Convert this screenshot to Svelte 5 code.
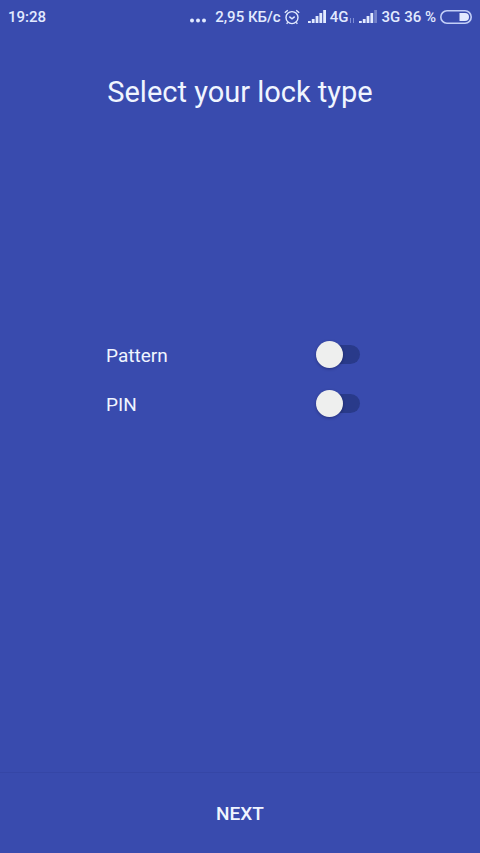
<script lang="ts">
  interface LockType {
    id: string;
    label: string;
    checked: boolean;
  }

  let lockTypes = $state<LockType[]>([
    { id: 'pattern', label: 'Pattern', checked: false },
    { id: 'pin', label: 'PIN', checked: false }
  ]);

  function select(id: string, checked: boolean) {
    lockTypes = lockTypes.map((t) => ({ ...t, checked: t.id === id && checked }));
  }
</script>

{#snippet signal(bars: number)}
  <svg class="signal" width="18" height="14" viewBox="0 0 18 14" aria-hidden="true">
    {#each [2, 4, 7, 10, 13] as h, i}
      <rect x={i * 3.8} y={13 - h} width="2.8" height={h} opacity={i < bars ? 1 : 0.35} />
    {/each}
  </svg>
{/snippet}

<div class="screen">
  <header class="status-bar">
    <time>19:28</time>
    <div class="status-right">
      <svg class="dots" width="18" height="14" viewBox="0 0 18 14" aria-hidden="true">
        <circle cx="3" cy="10.500" r="2" />
        <circle cx="9" cy="10.500" r="2" />
        <circle cx="15" cy="10.500" r="2" />
      </svg>
      <span class="speed">2,95 КБ/с</span>
      <svg class="alarm" width="16" height="16" viewBox="0 0 16 16" aria-hidden="true">
        <circle cx="8" cy="8.6" r="6" />
        <path d="M5.3 7.6 8 9.8l2.7-2.2M.8 3.8 3.8 1.2M15.2 3.8l-3-2.6M3.8 13.4l-1.2 1.4M12.2 13.4l1.2 1.4" />
      </svg>
      {@render signal(5)}
      <span class="network">4G</span>
      <svg class="traffic" width="6" height="14" viewBox="0 0 6 14" aria-hidden="true">
        <path d="M1.5 8v5M4.5 8v5" />
      </svg>
      {@render signal(4)}
      <span class="network">3G</span>
      <span class="level">36 %</span>
      <svg width="32" height="14" viewBox="0 0 32 14" aria-hidden="true">
        <rect class="shell" x=".8" y=".8" width="30.4" height="12.4" rx="6.2" />
        <path class="charge" d="M19.5 3H25a4 4 0 0 1 0 8h-5.5z" />
      </svg>
    </div>
  </header>

  <h1>Select your lock type</h1>

  <main>
    <div class="options">
      {#each lockTypes as type (type.id)}
        <label class="option" for={type.id}>
          <span>{type.label}</span>
          <input
            id={type.id}
            type="checkbox"
            role="switch"
            checked={type.checked}
            onchange={(e) => select(type.id, e.currentTarget.checked)}
          />
        </label>
      {/each}
    </div>
  </main>

  <footer>
    <button type="button">NEXT</button>
  </footer>
</div>

<style>
  :global(body) {
    margin: 0;
    background: #394bae;
  }

  .screen {
    display: flex;
    flex-direction: column;
    min-height: 100vh;
    background: #394bae;
    color: #f0f5ff;
    font-family: Roboto, sans-serif;
  }

  .status-bar {
    display: flex;
    justify-content: space-between;
    align-items: center;
    height: 34px;
    padding: 0 8px;
    color: #e2eaff;
    font-size: 15px;
    font-weight: 500;
    white-space: nowrap;
  }

  .status-right {
    display: flex;
    align-items: center;
  }

  .status-right svg {
    flex-shrink: 0;
    fill: #e2eaff;
  }

  .speed {
    margin-left: 8px;
  }

  .status-right .alarm {
    margin: 0 8px 0 3px;
    fill: none;
    stroke: #e2eaff;
    stroke-width: 1.4;
  }

  .network {
    margin-left: 4px;
  }

  .status-right .traffic {
    margin: 0 4px 0 1px;
    stroke: #7f8fd6;
  }

  .level {
    margin: 0 4px;
  }

  .status-right .shell {
    fill: none;
    stroke: #c3cff8;
    stroke-width: 1.6;
  }

  h1 {
    margin: 38px 0 0;
    font-size: 29px;
    font-weight: 400;
    line-height: 40px;
    text-align: center;
  }

  main {
    display: flex;
    flex: 1;
    align-items: flex-start;
    justify-content: center;
    padding: 218px 16px 16px;
  }

  .options {
    width: 268px;
  }

  .option {
    display: flex;
    align-items: center;
    justify-content: space-between;
    height: 49px;
    padding-right: 14px;
    font-size: 19px;
    cursor: pointer;
  }

  .option span {
    padding-top: 2px;
  }

  input {
    position: relative;
    width: 38px;
    height: 19px;
    margin: 0;
    border-radius: 10px;
    background: #293a8a;
    appearance: none;
    cursor: pointer;
  }

  /* thumb overhangs the track on the left */
  input::before {
    content: '';
    position: absolute;
    top: -4px;
    left: -6px;
    width: 27px;
    height: 27px;
    border-radius: 50%;
    background: #eeefee;
    box-shadow: 0 1px 3px rgba(0, 0, 40, 0.35);
    transition: left 0.15s;
  }

  input:checked::before {
    left: 17px;
  }

  footer {
    border-top: 1px solid #3546a6;
  }

  button {
    display: block;
    width: 100%;
    height: 80px;
    padding: 0;
    border: none;
    background: none;
    color: inherit;
    font-family: inherit;
    font-size: 19px;
    font-weight: 500;
    cursor: pointer;
  }
</style>
